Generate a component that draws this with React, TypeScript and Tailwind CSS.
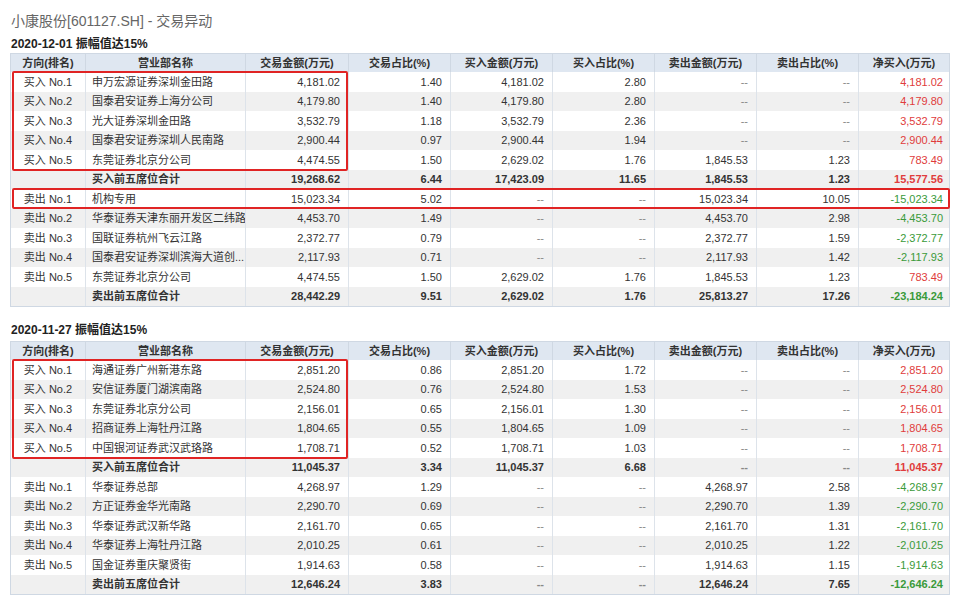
const font = { fontFamily: '"Liberation Sans", "Noto Sans CJK SC", sans-serif' };

type Row = { d: string; n: string; v: string[]; net: string; total?: boolean };

const heads = ['方向(排名)', '营业部名称', '交易金额(万元)', '交易占比(%)', '买入金额(万元)', '买入占比(%)', '卖出金额(万元)', '卖出占比(%)', '净买入(万元)'];
const widths = ['w-[75px] shrink-0', 'w-[160px] shrink-0', 'w-[103px] shrink-0', 'w-[102px] shrink-0', 'w-[102px] shrink-0', 'w-[102px] shrink-0', 'w-[102px] shrink-0', 'w-[102px] shrink-0', 'flex-1'];

const t1: Row[] = [
  { d: '买入 No.1', n: '申万宏源证券深圳金田路', v: ['4,181.02', '1.40', '4,181.02', '2.80', '--', '--'], net: '4,181.02' },
  { d: '买入 No.2', n: '国泰君安证券上海分公司', v: ['4,179.80', '1.40', '4,179.80', '2.80', '--', '--'], net: '4,179.80' },
  { d: '买入 No.3', n: '光大证券深圳金田路', v: ['3,532.79', '1.18', '3,532.79', '2.36', '--', '--'], net: '3,532.79' },
  { d: '买入 No.4', n: '国泰君安证券深圳人民南路', v: ['2,900.44', '0.97', '2,900.44', '1.94', '--', '--'], net: '2,900.44' },
  { d: '买入 No.5', n: '东莞证券北京分公司', v: ['4,474.55', '1.50', '2,629.02', '1.76', '1,845.53', '1.23'], net: '783.49' },
  { d: '', n: '买入前五席位合计', v: ['19,268.62', '6.44', '17,423.09', '11.65', '1,845.53', '1.23'], net: '15,577.56', total: true },
  { d: '卖出 No.1', n: '机构专用', v: ['15,023.34', '5.02', '--', '--', '15,023.34', '10.05'], net: '-15,023.34' },
  { d: '卖出 No.2', n: '华泰证券天津东丽开发区二纬路', v: ['4,453.70', '1.49', '--', '--', '4,453.70', '2.98'], net: '-4,453.70' },
  { d: '卖出 No.3', n: '国联证券杭州飞云江路', v: ['2,372.77', '0.79', '--', '--', '2,372.77', '1.59'], net: '-2,372.77' },
  { d: '卖出 No.4', n: '国泰君安证券深圳滨海大道创...', v: ['2,117.93', '0.71', '--', '--', '2,117.93', '1.42'], net: '-2,117.93' },
  { d: '卖出 No.5', n: '东莞证券北京分公司', v: ['4,474.55', '1.50', '2,629.02', '1.76', '1,845.53', '1.23'], net: '783.49' },
  { d: '', n: '卖出前五席位合计', v: ['28,442.29', '9.51', '2,629.02', '1.76', '25,813.27', '17.26'], net: '-23,184.24', total: true },
];

const t2: Row[] = [
  { d: '买入 No.1', n: '海通证券广州新港东路', v: ['2,851.20', '0.86', '2,851.20', '1.72', '--', '--'], net: '2,851.20' },
  { d: '买入 No.2', n: '安信证券厦门湖滨南路', v: ['2,524.80', '0.76', '2,524.80', '1.53', '--', '--'], net: '2,524.80' },
  { d: '买入 No.3', n: '东莞证券北京分公司', v: ['2,156.01', '0.65', '2,156.01', '1.30', '--', '--'], net: '2,156.01' },
  { d: '买入 No.4', n: '招商证券上海牡丹江路', v: ['1,804.65', '0.55', '1,804.65', '1.09', '--', '--'], net: '1,804.65' },
  { d: '买入 No.5', n: '中国银河证券武汉武珞路', v: ['1,708.71', '0.52', '1,708.71', '1.03', '--', '--'], net: '1,708.71' },
  { d: '', n: '买入前五席位合计', v: ['11,045.37', '3.34', '11,045.37', '6.68', '--', '--'], net: '11,045.37', total: true },
  { d: '卖出 No.1', n: '华泰证券总部', v: ['4,268.97', '1.29', '--', '--', '4,268.97', '2.58'], net: '-4,268.97' },
  { d: '卖出 No.2', n: '方正证券金华光南路', v: ['2,290.70', '0.69', '--', '--', '2,290.70', '1.39'], net: '-2,290.70' },
  { d: '卖出 No.3', n: '华泰证券武汉新华路', v: ['2,161.70', '0.65', '--', '--', '2,161.70', '1.31'], net: '-2,161.70' },
  { d: '卖出 No.4', n: '华泰证券上海牡丹江路', v: ['2,010.25', '0.61', '--', '--', '2,010.25', '1.22'], net: '-2,010.25' },
  { d: '卖出 No.5', n: '国金证券重庆聚贤街', v: ['1,914.63', '0.58', '--', '--', '1,914.63', '1.15'], net: '-1,914.63' },
  { d: '', n: '卖出前五席位合计', v: ['12,646.24', '3.83', '--', '--', '12,646.24', '7.65'], net: '-12,646.24', total: true },
];

function Table({ rows, boxes }: { rows: Row[]; boxes: { top: string; h: string; w: string }[] }) {
  return (
    <div className="relative mx-[10px] border border-[#cfd8e3] text-[11px] text-[#333]">
      <div className="flex h-[18px] bg-[#dfe7f1] font-bold text-[#333]">
        {heads.map((h, i) => (
          <div key={h} className={`${widths[i]} flex items-center justify-center border-r border-[#cfd8e3] last:border-r-0`}>{h}</div>
        ))}
      </div>
      {rows.map((r, ri) => (
        <div key={ri} className={`flex h-[19.5px] ${ri % 2 ? 'bg-[#f0f0f0]' : 'bg-white'} ${r.total ? 'font-bold' : ''}`}>
          <div className={`${widths[0]} flex items-center justify-center border-r border-[#dde3ea]`}>{r.d}</div>
          <div className={`${widths[1]} flex items-center whitespace-nowrap overflow-hidden border-r border-[#dde3ea] pl-[6px]`}>{r.n}</div>
          {r.v.map((v, vi) => (
            <div key={vi} className={`${widths[vi + 2]} flex items-center justify-end pr-[8px] border-r border-[#dde3ea] ${v === '--' ? 'text-[#888]' : ''}`}>{v}</div>
          ))}
          <div className={`flex-1 flex items-center justify-end pr-[6px] ${r.net.startsWith('-') ? 'text-[#3a9a3a]' : 'text-[#e03c3c]'}`}>{r.net}</div>
        </div>
      ))}
      {boxes.map((b, i) => (
        <div key={i} className={`absolute left-[1px] border-2 border-[#e02424] rounded-[2px] ${b.top} ${b.h} ${b.w}`} />
      ))}
    </div>
  );
}

export default function App() {
  return (
    <div className="w-[960px] h-[595px] bg-white overflow-hidden" style={font}>
      <div className="pt-[11px] pl-[11px] text-[14px] text-[#666]">小康股份[601127.SH] - 交易异动</div>
      <div className="pl-[11px] mt-[3px] text-[12px] font-bold text-[#222]">2020-12-01 振幅值达15%</div>
      <Table rows={t1} boxes={[{ top: 'top-[17px]', h: 'h-[100px]', w: 'w-[336px]' }, { top: 'top-[134px]', h: 'h-[21px]', w: 'w-[938px]' }]} />
      <div className="pl-[11px] mt-[14px] mb-[2px] text-[12px] font-bold text-[#222]">2020-11-27 振幅值达15%</div>
      <Table rows={t2} boxes={[{ top: 'top-[17px]', h: 'h-[100px]', w: 'w-[336px]' }]} />
    </div>
  );
}
